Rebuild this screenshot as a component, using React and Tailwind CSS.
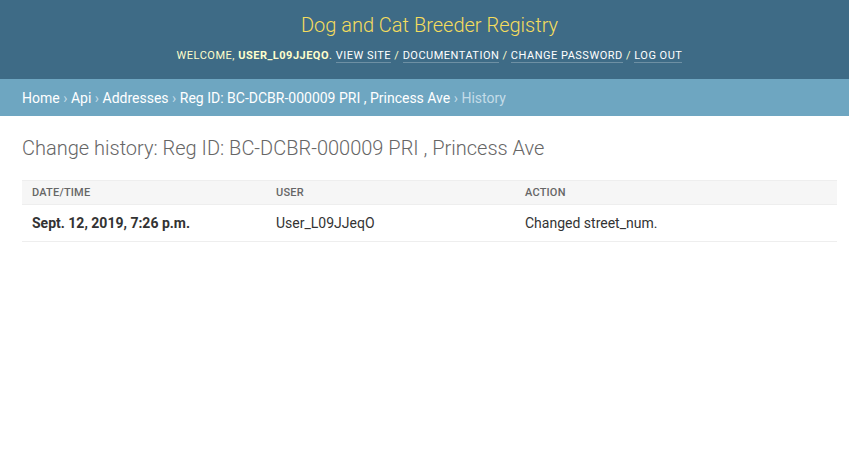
export default function App() {
  const font = { fontFamily: 'Roboto, "Lucida Grande", Verdana, sans-serif' }
  return (
    <div className="min-h-[455px] bg-white text-[#333]" style={font}>
      {/* Header */}
      <div className="h-[79px] bg-[#3e6b86] flex flex-col items-center pt-[11px] pl-[10px]">
        <h1 className="text-[20px] font-light text-[#f5dd5d] leading-[28px]">Dog and Cat Breeder Registry</h1>
        <div className="mt-[9px] text-[11px] uppercase tracking-[0.5px] text-[#ffc] leading-[16px]">
          Welcome, <strong className="font-bold">User_L09JJeqO</strong>.{' '}
          <a className="text-white border-b border-white/25">View site</a> /{' '}
          <a className="text-white border-b border-white/25">Documentation</a> /{' '}
          <a className="text-white border-b border-white/25">Change password</a> /{' '}
          <a className="text-white border-b border-white/25">Log out</a>
        </div>
      </div>

      {/* Breadcrumbs */}
      <div className="h-[37px] bg-[#6ea6c1] px-[22px] pt-[1px] flex items-center text-[14px] text-[#c4dce8]">
        <a className="text-white">Home</a>
        <span className="mx-[3.5px]">›</span>
        <a className="text-white">Api</a>
        <span className="mx-[3.5px]">›</span>
        <a className="text-white">Addresses</a>
        <span className="mx-[3.5px]">›</span>
        <a className="text-white">Reg ID: BC-DCBR-000009 PRI , Princess Ave</a>
        <span className="mx-[3.5px]">›</span>
        <span>History</span>
      </div>

      {/* Content */}
      <div className="pl-[22px] pr-[12px] pt-[20px]">
        <h1 className="text-[20px] font-light text-[#666] leading-[24px]">
          Change history: Reg ID: BC-DCBR-000009 PRI , Princess Ave
        </h1>

        <table className="mt-[20px] w-full border-collapse text-[14px]">
          <thead>
            <tr className="bg-[#f6f6f6] border-t border-b border-[#eee]">
              <th className="w-[244px] text-left px-[10px] h-[24px] pt-[2px] text-[11px] font-medium uppercase tracking-[0.2px] text-[#666]">Date/time</th>
              <th className="w-[249px] text-left px-[10px] pt-[2px] text-[11px] font-medium uppercase tracking-[0.2px] text-[#666]">User</th>
              <th className="text-left px-[10px] pt-[2px] text-[11px] font-medium uppercase tracking-[0.2px] text-[#666]">Action</th>
            </tr>
          </thead>
          <tbody>
            <tr className="border-b border-[#eee]">
              <th className="text-left px-[10px] h-[37px] pt-[1px] font-bold text-[#333]">Sept. 12, 2019, 7:26 p.m.</th>
              <td className="px-[10px] pt-[1px] text-[#333]">User_L09JJeqO</td>
              <td className="px-[10px] pt-[1px] text-[#333]">Changed street_num.</td>
            </tr>
          </tbody>
        </table>
      </div>
    </div>
  )
}
